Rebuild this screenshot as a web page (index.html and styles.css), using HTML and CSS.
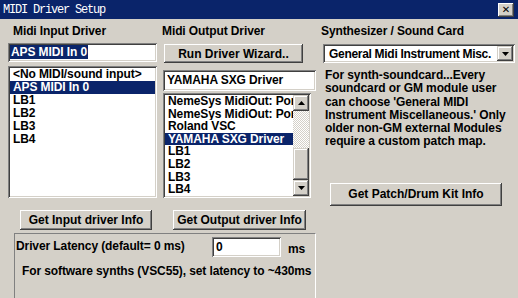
FILE: index.html
```html
<!DOCTYPE html>
<html lang="en">
<head>
  <meta charset="UTF-8">
  <title>MIDI Driver Setup</title>
  <link rel="stylesheet" href="styles.css">
</head>
<body>
<div class="window">
  <div class="titlebar">
    <span class="title">MIDI Driver Setup</span>
    <span class="close">&#x2715;</span>
  </div>

  <div class="content">
    <div class="left">
      <div class="cols">
        <div class="col col-in">
          <div class="label">Midi Input Driver</div>
          <div class="field field-in"><span class="sel">APS MIDI In 0</span></div>
          <ul class="list list-in">
            <li>&lt;No MIDI/sound input&gt;</li>
            <li class="on">APS MIDI In 0</li>
            <li>LB1</li>
            <li>LB2</li>
            <li>LB3</li>
            <li>LB4</li>
          </ul>
        </div>

        <div class="col col-out">
          <div class="label label-out">Midi Output Driver</div>
          <button class="btn btn-wizard">Run Driver Wizard..</button>
          <div class="field field-out">YAMAHA SXG Driver</div>
          <div class="list list-out">
            <ul>
              <li>NemeSys MidiOut: Por</li>
              <li>NemeSys MidiOut: Por</li>
              <li>Roland VSC</li>
              <li class="on">YAMAHA SXG Driver</li>
              <li>LB1</li>
              <li>LB2</li>
              <li>LB3</li>
              <li>LB4</li>
            </ul>
            <div class="scrollbar">
              <span class="arrow"><svg width="7" height="4" viewBox="0 0 7 4"><path d="M3.5 0 L7 4 L0 4 Z" fill="#000"/></svg></span>
              <span class="track"></span>
              <span class="thumb"></span>
              <span class="arrow"><svg width="7" height="4" viewBox="0 0 7 4"><path d="M0 0 L7 0 L3.5 4 Z" fill="#000"/></svg></span>
            </div>
          </div>
        </div>
      </div>

      <div class="btnrow">
        <button class="btn btn-info">Get Input driver Info</button>
        <button class="btn btn-info">Get Output driver Info</button>
      </div>

      <div class="latency">
        <div class="lat-row">
          <span class="lat-label">Driver Latency (default= 0 ms)</span>
          <div class="field lat-field">0</div>
          <span class="lat-unit">ms</span>
        </div>
        <p class="lat-hint">For software synths (VSC55), set latency to ~430ms</p>
      </div>
    </div>

    <div class="right">
      <div class="label label-synth">Synthesizer / Sound Card</div>
      <div class="field combo">
        <span class="combo-text">General Midi Instrument Misc.</span>
        <span class="drop"><svg width="7" height="4" viewBox="0 0 7 4"><path d="M0 0 L7 0 L3.5 4 Z" fill="#000"/></svg></span>
      </div>
      <p class="note">For synth-soundcard...Every<br>soundcard or GM module user<br>can choose 'General MIDI<br>Instrument Miscellaneous.' Only<br>older non-GM external Modules<br>require a custom patch map.</p>
      <button class="btn btn-patch">Get Patch/Drum Kit Info</button>
    </div>
  </div>
</div>
</body>
</html>
```

FILE: styles.css
```css
body {
  margin: 0;
  background: #d4d0c8;
  font: bold 12px "Liberation Sans", Arial, sans-serif;
  letter-spacing: -0.1px;
  color: #000;
}
.window { width: 518px; height: 298px; overflow: hidden; }

.titlebar {
  height: 19px;
  background: #0a246a;
  color: #fff;
  display: flex;
  align-items: center;
  justify-content: space-between;
  padding: 0 4px 0 3px;
  font: 12px "Liberation Mono", monospace;
  letter-spacing: -1.2px;
}
.close {
  width: 16px;
  height: 14px;
  background: #d4d0c8;
  color: #000;
  font: bold 10px "DejaVu Sans", sans-serif;
  letter-spacing: 0;
  display: flex;
  align-items: center;
  justify-content: center;
  box-shadow: inset -1px -1px #404040, inset 1px 1px #fff, inset -2px -2px #808080;
}

.content { display: flex; }
.left { width: 318px; }
.cols { display: flex; }
.col-in { width: 149px; margin-left: 8px; }
.col-out { width: 153px; margin-left: 6px; }

.label { margin-top: 5px; height: 14px; line-height: 14px; padding-left: 5px; }
.label-out { padding-left: 0; margin-left: -1px; }
.label-synth { padding-left: 1px; }

.field {
  box-sizing: border-box;
  background: #fff;
  box-shadow: inset 1px 1px #808080, inset -1px -1px #fff, inset 2px 2px #404040, inset -2px -2px #d4d0c8;
}
.field-in { margin-top: 5px; height: 19px; padding: 2px 0 0 2px; }
.sel { background: #0a246a; color: #fff; display: inline-block; line-height: 14px; padding: 0 1px; }
.field-out { margin-top: 7px; height: 21px; width: 153px; padding: 3px 0 0 4px; line-height: 15px; }

.list {
  box-sizing: border-box;
  background: #fff;
  margin: 0;
  padding: 2px;
  list-style: none;
  box-shadow: inset 1px 1px #808080, inset -1px -1px #fff, inset 2px 2px #404040, inset -2px -2px #d4d0c8;
  overflow: hidden;
}
.list ul { list-style: none; margin: 0; padding: 0; flex: 1; overflow: hidden; }
.list li { height: 13px; line-height: 13px; padding-left: 3px; white-space: nowrap; overflow: hidden; }
.list li.on { background: #0a246a; color: #fff; }
.list-in { margin-top: 4px; height: 132px; }
.list-out { margin-top: 2px; height: 105px; width: 148px; display: flex; }
.list-out li { height: 12.6px; line-height: 12.6px; }

.scrollbar { width: 16px; display: flex; flex-direction: column; }
.arrow {
  height: 16px;
  background: #d4d0c8;
  display: flex;
  align-items: center;
  justify-content: center;
  box-shadow: inset -1px -1px #404040, inset 1px 1px #d4d0c8, inset -2px -2px #808080, inset 2px 2px #fff;
}
.track {
  height: 37px;
  background: repeating-conic-gradient(#fff 0 25%, #d4d0c8 0 50%) 0 0 / 2px 2px;
}
.thumb {
  height: 32px;
  background: #d4d0c8;
  box-shadow: inset -1px -1px #404040, inset 1px 1px #d4d0c8, inset -2px -2px #808080, inset 2px 2px #fff;
}

.btn {
  font: inherit;
  color: #000;
  background: #d4d0c8;
  border: none;
  padding: 0;
  box-shadow: inset -1px -1px #404040, inset 1px 1px #fff, inset -2px -2px #808080, inset 2px 2px #d4d0c8;
}
.btn-wizard { margin: 6px 0 0 1px; width: 139px; height: 19px; display: block; }

.btnrow { display: flex; gap: 21px; margin-top: 12px; padding-left: 20px; }
.btn-info { height: 20px; width: 132px; }
.btn-info + .btn-info { width: 133px; }

.latency {
  box-sizing: border-box;
  margin: 3px 0 0 14px;
  width: 302px;
  height: 66px;
  border: 1px solid;
  border-color: #808080 #fff #fff #808080;
  padding: 3px 0 0 1px;
}
.lat-row { display: flex; }
.lat-label { width: 196px; padding-top: 2px; }
.lat-field { width: 69px; height: 20px; padding: 3px 0 0 4px; }
.lat-unit { margin-left: 7px; padding-top: 5px; }
.lat-hint { margin: 7px 0 0 6px; line-height: 14px; white-space: nowrap; }

.right { width: 196px; margin-left: 2px; }
.combo {
  margin: 6px 0 0 3px;
  width: 192px;
  height: 19px;
  display: flex;
  align-items: center;
  justify-content: space-between;
  padding: 0 2px 0 6px;
}
.combo-text { white-space: nowrap; letter-spacing: -0.3px; }
.drop {
  flex: none;
  width: 16px;
  height: 15px;
  background: #d4d0c8;
  display: flex;
  align-items: center;
  justify-content: center;
  box-shadow: inset -1px -1px #404040, inset 1px 1px #d4d0c8, inset -2px -2px #808080, inset 2px 2px #fff;
}
.note { margin: 6px 0 0 5px; line-height: 13.3px; white-space: nowrap; }
.btn-patch { margin: 34px 0 0 10px; width: 172px; height: 23px; display: block; }
```
